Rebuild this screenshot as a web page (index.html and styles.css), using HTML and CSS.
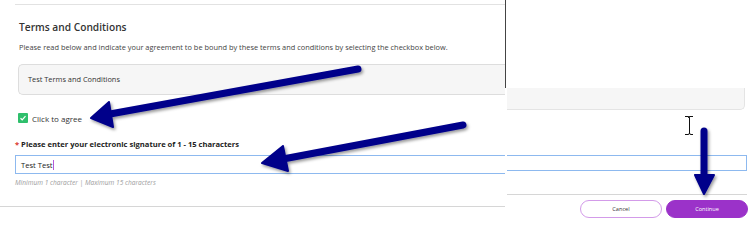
FILE: index.html
```html
<!DOCTYPE html>
<html lang="en">

<head>
    <meta charset="UTF-8">
    <meta name="viewport" content="width=device-width, initial-scale=1.0">
    <title>Terms and Conditions</title>
    <link rel="stylesheet" href="styles.css">
</head>

<body>
    <div class="shot">
        <!-- left capture -->
        <div class="left">
            <div class="rule-top"></div>
            <h2 class="title">Terms and Conditions</h2>
            <p class="intro">Please read below and indicate your agreement to be bound by these terms and conditions by selecting the checkbox below.</p>
            <div class="terms">Test Terms and Conditions</div>
            <label class="agree">
                <span class="check">
                    <svg width="8" height="8" viewBox="0 0 8 8"><path d="M1.5 4.2 L3.2 5.8 L6.5 2.2" fill="none" stroke="#fff" stroke-width="1.2"/></svg>
                </span>
                Click to agree
            </label>
            <div class="sig-label"><span class="req">*</span> Please enter your electronic signature of 1 - 15 characters</div>
            <div class="sig-input">Test Test<span class="caret"></span></div>
            <div class="help">Minimum 1 character | Maximum 15 characters</div>
            <div class="rule-bottom"></div>
        </div>

        <!-- right capture -->
        <div class="right">
            <div class="gap"></div>
            <div class="terms-tail"></div>
            <div class="input-tail"></div>
            <div class="rule-right"></div>
            <div class="buttons">
                <button class="btn cancel">Cancel</button>
                <button class="btn continue">Continue</button>
            </div>
        </div>

        <!-- annotations on top -->
        <svg class="marks" width="750" height="237" viewBox="0 0 750 237">
            <defs>
                <filter id="shadow" x="-10%" y="-10%" width="130%" height="130%">
                    <feDropShadow dx="1.5" dy="2" stdDeviation="1.5" flood-color="#000" flood-opacity="0.4"/>
                </filter>
            </defs>
            <g filter="url(#shadow)" fill="#06068a" stroke="#06068a" stroke-linecap="round" stroke-linejoin="round">
                <line x1="358" y1="69" x2="110" y2="114" stroke-width="7"/>
                <polygon points="91,118 113,127 109,102" stroke-width="2"/>
                <line x1="463" y1="125" x2="283" y2="159" stroke-width="7"/>
                <polygon points="262,163 288,171 283,146" stroke-width="2"/>
                <line x1="704" y1="131" x2="704" y2="178" stroke-width="7"/>
                <polygon points="695,175 714,175 704,194" stroke-width="2"/>
            </g>
            <path d="M685 116.5 h3 q1.5 0 1.5 1.5 v15 q0 1.5 -1.5 1.5 h-3 M693 116.5 h-3 q-1.5 0 -1.5 1.5 M689.5 133 q0 1.5 1.5 1.5 h2" fill="none" stroke="#111" stroke-width="1"/>
        </svg>
    </div>
</body>

</html>
```

FILE: styles.css
```css
body {
    margin: 0;
    padding: 0;
    background-color: #fff;
    font-family: "Open Sans", "Liberation Sans", sans-serif;
    color: #333;
}

.shot {
    position: relative;
    display: flex;
    width: 750px;
    height: 237px;
    overflow: hidden;
}

.left {
    width: 505px;
    flex-shrink: 0;
}

.rule-top {
    margin: 4px 0 0 15px;
    border-top: 1px solid #e2e2e2;
}

.title {
    margin: 15px 0 0 19px;
    font-size: 10.2px;
    line-height: 14px;
    font-weight: 600;
    color: #333;
}

.intro {
    margin: 8px 0 0 19px;
    font-size: 7.4px;
    line-height: 10px;
    color: #444;
    white-space: nowrap;
}

.terms {
    margin: 12px 0 0 18px;
    height: 29px;
    padding-left: 9px;
    border: 1px solid #ddd;
    border-right: none;
    border-radius: 5px 0 0 5px;
    background-color: #f6f6f6;
    font-size: 7.4px;
    line-height: 29px;
    color: #333;
}

.agree {
    display: flex;
    align-items: center;
    gap: 4px;
    margin: 18px 0 0 18px;
    height: 10px;
    font-size: 8px;
    color: #333;
}

.check {
    display: flex;
    align-items: center;
    justify-content: center;
    width: 10px;
    height: 10px;
    box-sizing: border-box;
    border-radius: 1px;
    background-color: #2fbf6c;
}

.sig-label {
    margin: 16px 0 0 15px;
    font-size: 7.6px;
    line-height: 10px;
    font-weight: 700;
    color: #222;
}

.req {
    color: #d9342b;
}

.sig-input {
    display: flex;
    align-items: center;
    margin: 6px 0 0 15px;
    height: 17px;
    padding-left: 5px;
    border: 1px solid #8db9ef;
    border-right: none;
    font-size: 7.6px;
    color: #222;
}

.caret {
    display: inline-block;
    width: 1.5px;
    height: 10px;
    background-color: #b65ad8;
}

.help {
    margin: 4px 0 0 15px;
    font-size: 6.6px;
    line-height: 9px;
    font-style: italic;
    color: #9c9c9c;
}

.rule-bottom {
    margin-top: 19px;
    border-top: 1px solid #d6d6d6;
}

.right {
    flex: 1;
}

.gap {
    height: 88px;
    border-left: 1px solid #444;
}

.terms-tail {
    margin-left: 2px;
    margin-right: 5px;
    height: 21px;
    border: 1px solid #e4e4e4;
    border-left: none;
    border-top: none;
    border-radius: 0 0 5px 0;
    background-color: #f6f6f6;
}

.input-tail {
    margin: 45px 3px 0 2px;
    height: 14px;
    border: 1px solid #8db9ef;
    border-left: none;
}

.rule-right {
    margin: 23px 3px 0 2px;
    border-top: 1px solid #d6d6d6;
}

.buttons {
    display: flex;
    justify-content: flex-end;
    gap: 4px;
    margin-top: 5px;
    padding-right: 2px;
}

.btn {
    width: 82px;
    height: 18px;
    padding: 0;
    border-radius: 9px;
    font-family: "Open Sans", "Liberation Sans", sans-serif;
    font-size: 5.6px;
}

.cancel {
    border: 1px solid #d39be9;
    background-color: #fff;
    color: #333;
}

.continue {
    border: 1px solid #9b32c9;
    background-color: #9b32c9;
    color: #fff;
}

.marks {
    position: absolute;
    left: 0;
    top: 0;
    pointer-events: none;
}
```
